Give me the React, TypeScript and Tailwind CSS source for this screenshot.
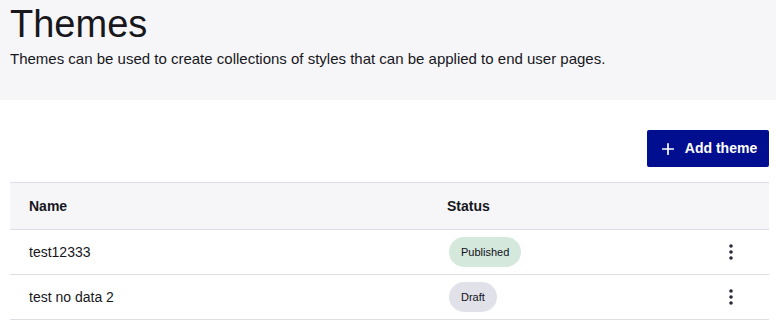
import { Plus } from "lucide-react";

interface ThemeRow {
  name: string;
  status: "Published" | "Draft";
}

const rows: ThemeRow[] = [
  { name: "test12333", status: "Published" },
  { name: "test no data 2", status: "Draft" },
];

function Kebab() {
  return (
    <svg width="4" height="16" viewBox="0 0 4 16" className="text-[#2a2a3a]">
      <circle cx="2" cy="2" r="1.8" fill="currentColor" />
      <circle cx="2" cy="8" r="1.8" fill="currentColor" />
      <circle cx="2" cy="14" r="1.8" fill="currentColor" />
    </svg>
  );
}

export default function App() {
  return (
    <div
      className="w-[776px] h-[324px] bg-white text-[#17171c] overflow-hidden"
      style={{ fontFamily: '"Liberation Sans", Arial, sans-serif' }}
    >
      {/* page header */}
      <div className="bg-[#f6f6f9] h-[100px] px-[10px] pt-[2px]">
        <h1 className="text-[38px] leading-[44px] font-normal">Themes</h1>
        <p className="text-[15px] leading-[20px] mt-[3px]">
          Themes can be used to create collections of styles that can be applied to end user pages.
        </p>
      </div>

      <div className="px-[10px] pr-[7px]">
        <div className="flex justify-end pt-[30px] pb-[15px]">
          <button className="h-[37px] w-[122px] bg-[#000e8f] rounded-[2px] text-white flex items-center justify-center gap-[8px] text-[14px] font-bold">
            <Plus size={18} strokeWidth={2.25} />
            Add theme
          </button>
        </div>

        {/* table */}
        <div className="border-t border-[#dedee4]">
          <div className="grid grid-cols-[418px_1fr_76px] h-[47px] items-center bg-[#f6f6f9] border-b border-[#dedee4] text-[14px] font-bold">
            <div className="pl-[19px]">Name</div>
            <div className="pl-[19px]">Status</div>
            <div />
          </div>
          {rows.map((r) => (
            <div
              key={r.name}
              className="grid grid-cols-[418px_1fr_76px] h-[45px] items-center border-b border-[#dedee4] text-[14px]"
            >
              <div className="pl-[19px]">{r.name}</div>
              <div className="pl-[21px]">
                <span
                  className={
                    "inline-flex items-center h-[30px] px-[12px] rounded-full text-[11px] text-[#111118] " +
                    (r.status === "Published" ? "bg-[#d4e8dc]" : "bg-[#e1e1e9]")
                  }
                >
                  {r.status}
                </span>
              </div>
              <div className="flex justify-center">
                <Kebab />
              </div>
            </div>
          ))}
        </div>
      </div>
    </div>
  );
}
